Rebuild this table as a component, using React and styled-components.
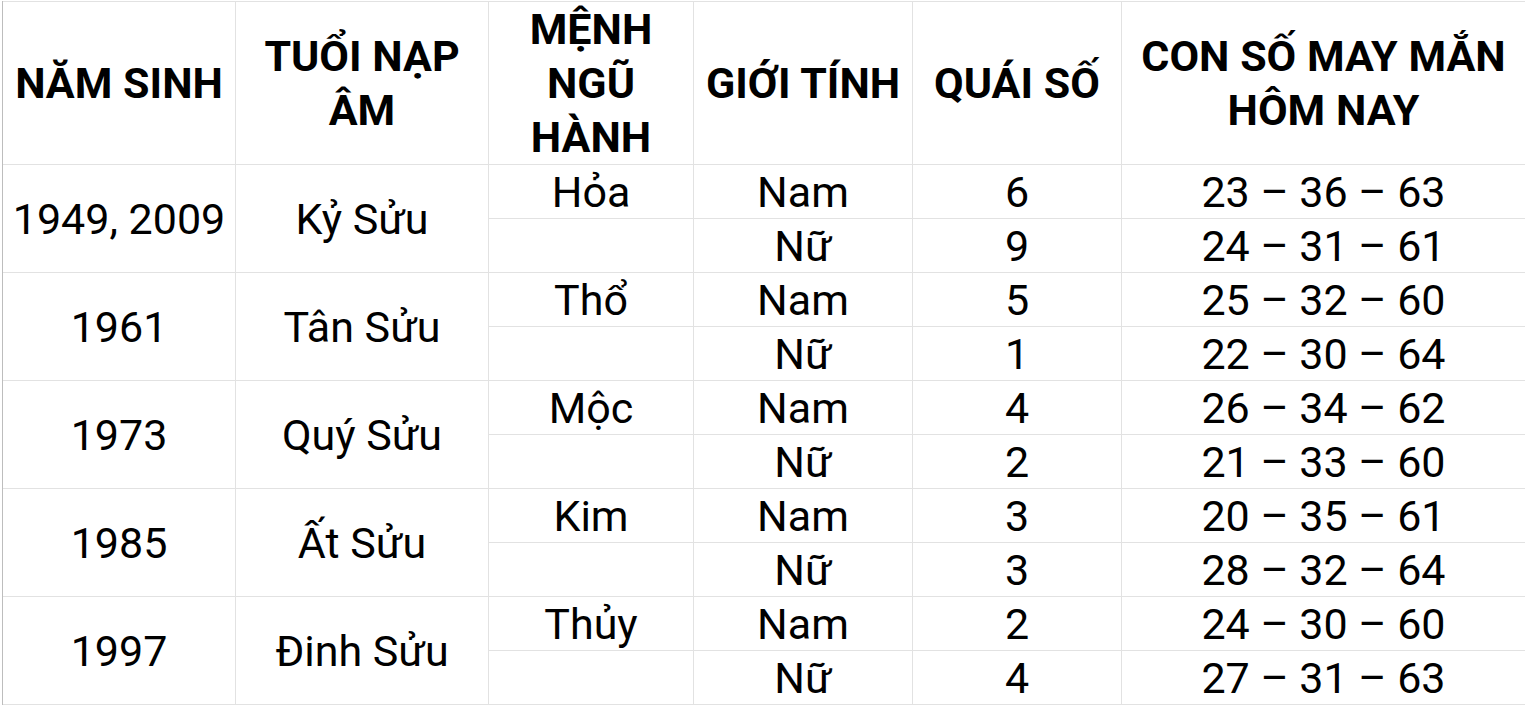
import styled, { createGlobalStyle } from "styled-components";

const GlobalStyle = createGlobalStyle`
    html, body {
        margin: 0;
        padding: 0;
        background: #ffffff;
    }
    body {
        font-family: Roboto, "Noto Sans", "Liberation Sans", sans-serif;
        color: #000000;
    }
`;

const Sheet = styled.div`
    display: grid;
    grid-template-columns: 232px 252px 204px 218px 208px 1fr;
    grid-template-rows: 162px repeat(10, 53px);
    gap: 1px;
    margin: 1px 0 0 2px;
    padding: 1px 0;
    background: #e2e2e2;
    border-left: 1px solid #bdbdbd;
    font-size: 43px;
`;

const Cell = styled.div`
    background: #ffffff;
    display: flex;
    align-items: center;
    justify-content: center;
    text-align: center;
    padding: 0 2px;
    line-height: 54px;
    white-space: nowrap;
    grid-row: ${(p) => (p.$span ? `span ${p.$span}` : "auto")};
`;

const HeadCell = styled(Cell)`
    font-weight: 700;
`;

const rows = [
    {
        year: "1949, 2009",
        napAm: "Kỷ Sửu",
        menh: "Hỏa",
        nam: ["6", "23 – 36 – 63"],
        nu: ["9", "24 – 31 – 61"],
    },
    {
        year: "1961",
        napAm: "Tân Sửu",
        menh: "Thổ",
        nam: ["5", "25 – 32 – 60"],
        nu: ["1", "22 – 30 – 64"],
    },
    {
        year: "1973",
        napAm: "Quý Sửu",
        menh: "Mộc",
        nam: ["4", "26 – 34 – 62"],
        nu: ["2", "21 – 33 – 60"],
    },
    {
        year: "1985",
        napAm: "Ất Sửu",
        menh: "Kim",
        nam: ["3", "20 – 35 – 61"],
        nu: ["3", "28 – 32 – 64"],
    },
    {
        year: "1997",
        napAm: "Đinh Sửu",
        menh: "Thủy",
        nam: ["2", "24 – 30 – 60"],
        nu: ["4", "27 – 31 – 63"],
    },
];

export default function App() {
    return (
        <>
            <GlobalStyle />
            <Sheet role="table">
                <HeadCell>NĂM SINH</HeadCell>
                <HeadCell>
                    TUỔI NẠP
                    <br />
                    ÂM
                </HeadCell>
                <HeadCell>
                    MỆNH
                    <br />
                    NGŨ
                    <br />
                    HÀNH
                </HeadCell>
                <HeadCell>GIỚI TÍNH</HeadCell>
                <HeadCell>QUÁI SỐ</HeadCell>
                <HeadCell>
                    CON SỐ MAY MẮN
                    <br />
                    HÔM NAY
                </HeadCell>

                {rows.map((r) => (
                    <Group key={r.year} row={r} />
                ))}
            </Sheet>
        </>
    );
}

function Group({ row }) {
    return (
        <>
            <Cell $span={2}>{row.year}</Cell>
            <Cell $span={2}>{row.napAm}</Cell>
            <Cell>{row.menh}</Cell>
            <Cell>Nam</Cell>
            <Cell>{row.nam[0]}</Cell>
            <Cell>{row.nam[1]}</Cell>
            <Cell />
            <Cell>Nữ</Cell>
            <Cell>{row.nu[0]}</Cell>
            <Cell>{row.nu[1]}</Cell>
        </>
    );
}
